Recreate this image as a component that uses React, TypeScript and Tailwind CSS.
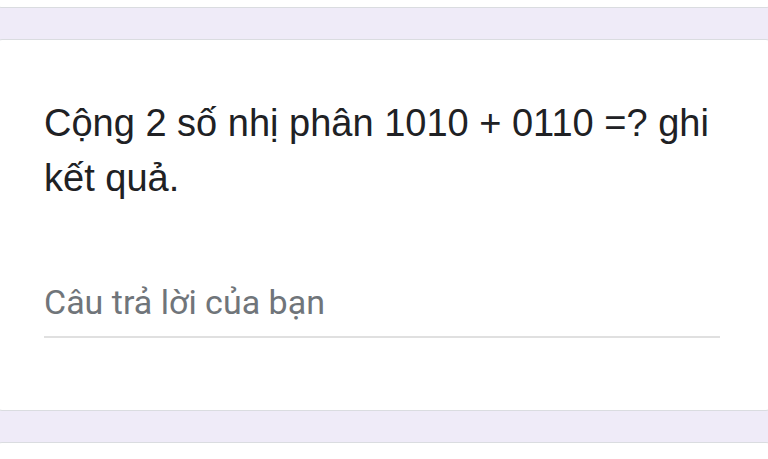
export default function App() {
  return (
    <div className="h-[459px] w-[768px] overflow-hidden bg-[#efebf8]">
      <div className="-mx-[6px] flex flex-col">
        {/* previous question card, only its bottom edge shows */}
        <div className="h-[8px] rounded-b-lg border border-t-0 border-[#dadce0] bg-white" />

        <div className="mt-[31px] h-[372px] rounded-lg border border-[#dadce0] bg-white px-[49px] pt-[56px]">
          <p className="text-[38px] leading-[55px] text-[#202124] [font-family:'Liberation_Sans',Arial,sans-serif]">
            Cộng 2 số nhị phân 1010 + 0110 =? ghi kết quả.
          </p>

          <div className="mt-[76px] w-[676px] border-b-2 border-[#e0e0e0] pb-[14px]">
            <span className="text-[34px] leading-[40px] text-[#70757a] [font-family:Roboto,'Noto_Sans',sans-serif]">
              Câu trả lời của bạn
            </span>
          </div>
        </div>

        {/* next question card */}
        <div className="mt-[31px] h-[40px] rounded-t-lg border border-b-0 border-[#dadce0] bg-white" />
      </div>
    </div>
  );
}
